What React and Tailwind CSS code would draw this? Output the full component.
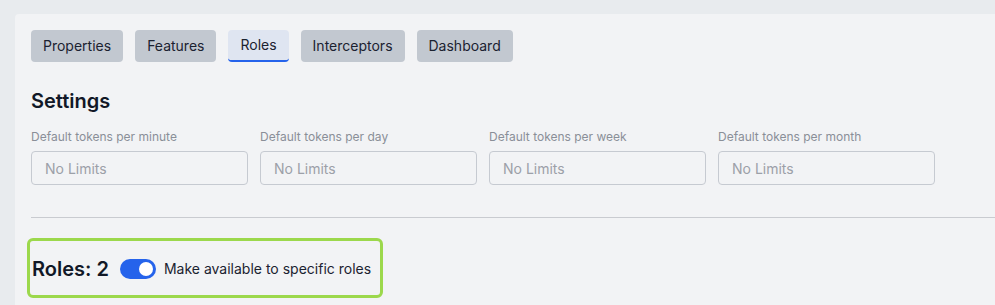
import { useState } from 'react';

const tabs = ['Properties', 'Features', 'Roles', 'Interceptors', 'Dashboard'];
const limits = ['minute', 'day', 'week', 'month'];

function Toggle({ on, onChange }) {
  return (
    <button
      onClick={() => onChange(!on)}
      className={`relative h-5 w-9 rounded-full ${on ? 'bg-[#2563eb]' : 'bg-gray-300'}`}
    >
      <span
        className={`absolute top-[3px] h-[14px] w-[14px] rounded-full bg-white ${on ? 'left-[19px]' : 'left-[3px]'}`}
      />
    </button>
  );
}

export default function App() {
  const [active, setActive] = useState('Roles');
  const [specific, setSpecific] = useState(true);

  return (
    <div className="h-[305px] overflow-hidden bg-[#e8ebee] pl-[15px] pt-[14px] font-['Inter',sans-serif] text-[#1b2230]">
      <div className="h-full rounded-tl-sm bg-[#f2f3f5] pl-4 pt-4">
        <div className="flex gap-3">
          {tabs.map((t) => (
            <button
              key={t}
              onClick={() => setActive(t)}
              className={`h-8 rounded px-3 text-sm ${
                active === t
                  ? 'border-b-2 border-[#2563eb] bg-[#dfe5f1]'
                  : 'bg-[#c2c8d0]'
              }`}
            >
              {t}
            </button>
          ))}
        </div>

        <h2 className="mt-[25px] text-xl font-semibold leading-7 text-[#111827]">Settings</h2>

        <div className="mt-[14px] flex gap-3">
          {limits.map((l) => (
            <label key={l} className="w-[217px]">
              <span className="block text-xs leading-4 text-[#8a8f98]">Default tokens per {l}</span>
              <input
                placeholder="No Limits"
                className="mt-[6px] h-[34px] w-full rounded border border-[#c6cad1] bg-transparent px-[13px] text-sm placeholder:text-[#9ca0a8] outline-none"
              />
            </label>
          ))}
        </div>

        <div className="mt-8 border-t border-[#c9cbd0]" />

        <div className="-ml-1 mt-5 inline-flex h-[60px] w-[356px] items-center rounded-md border-[3px] border-[#9cd84c] pl-[2px] pt-[2px]">
          <h3 className="text-xl font-semibold text-[#111827]">Roles: 2</h3>
          <div className="ml-[11px] flex items-center gap-2">
            <Toggle on={specific} onChange={setSpecific} />
            <span className="text-sm">Make available to specific roles</span>
          </div>
        </div>
      </div>
    </div>
  );
}
